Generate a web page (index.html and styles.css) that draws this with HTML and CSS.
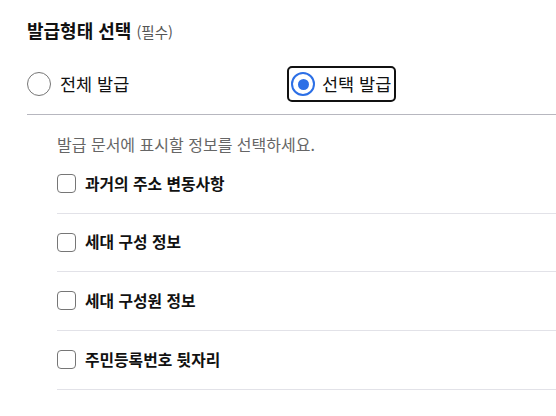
FILE: index.html
```html
<!DOCTYPE html>
<html lang="ko">
<head>
    <meta charset="UTF-8">
    <meta name="viewport" content="width=device-width, initial-scale=1.0">
    <title>발급형태 선택</title>
    <link rel="stylesheet" href="styles.css">
</head>
<body>
    <div class="container">
        <h2 class="title">발급형태 선택 <span class="required">(필수)</span></h2>

        <div class="radio-group">
            <label class="option">
                <span class="radio"></span>
                <span>전체 발급</span>
            </label>
            <label class="option focused">
                <span class="radio checked"></span>
                <span>선택 발급</span>
            </label>
        </div>

        <div class="details">
            <p class="help">발급 문서에 표시할 정보를 선택하세요.</p>
            <ul class="check-list">
                <li><span class="checkbox"></span>과거의 주소 변동사항</li>
                <li><span class="checkbox"></span>세대 구성 정보</li>
                <li><span class="checkbox"></span>세대 구성원 정보</li>
                <li><span class="checkbox"></span>주민등록번호 뒷자리</li>
            </ul>
        </div>
    </div>
</body>
</html>
```

FILE: styles.css
```css
body {
    margin: 0;
    background: #fff;
    color: #111;
    font-family: "Noto Sans CJK KR", "Noto Sans", sans-serif;
}
.container {
    padding: 18px 0 0 27px;
}
.title {
    margin: 0 0 22px;
    font-size: 18px;
    line-height: 24px;
    font-weight: bold;
}
.required {
    font-size: 14.5px;
    font-weight: normal;
    color: #555;
}
.radio-group {
    display: grid;
    grid-template-columns: 266px auto;
    justify-content: start;
    padding-bottom: 12px;
    border-bottom: 1px solid #b7b7bf;
}
.option {
    display: inline-flex;
    align-items: center;
    gap: 9px;
    margin-left: -6px;
    padding: 4px;
    border: 2px solid transparent;
    border-radius: 5px;
    font-size: 17.5px;
    line-height: 24px;
    justify-self: start;
}
.option.focused {
    border-color: #111;
    padding-left: 2px;
    padding-right: 3px;
    gap: 7px;
}
.radio {
    width: 24px;
    height: 24px;
    box-sizing: border-box;
    border: 1px solid #767676;
    border-radius: 50%;
    display: flex;
    align-items: center;
    justify-content: center;
}
.radio.checked {
    border: 2px solid #2c6fe6;
}
.radio.checked::after {
    content: "";
    width: 11px;
    height: 11px;
    border-radius: 50%;
    background: #2c6fe6;
}
.details {
    padding: 18px 0 0 30px;
}
.help {
    margin: 0;
    font-size: 16px;
    line-height: 22px;
    color: #666;
}
.check-list {
    list-style: none;
    margin: 0;
    padding: 0;
}
.check-list li {
    display: flex;
    align-items: center;
    gap: 9px;
    padding: 18.5px 0 19.2px;
    border-bottom: 1px solid #e2e2e8;
    font-size: 15.8px;
    line-height: 20px;
    font-weight: bold;
}
.checkbox {
    width: 19px;
    height: 19px;
    box-sizing: border-box;
    border: 1.5px solid #767676;
    border-radius: 4px;
}
```
